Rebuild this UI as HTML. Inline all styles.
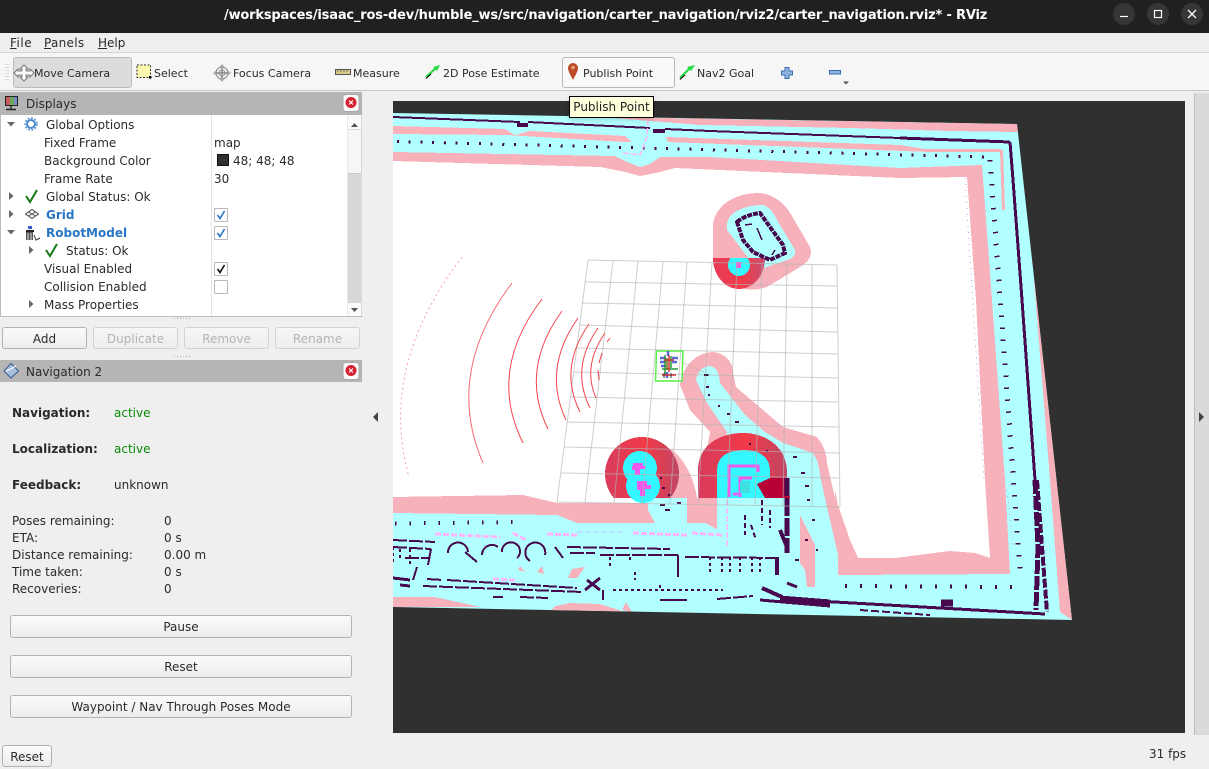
<!DOCTYPE html>
<html><head><meta charset="utf-8"><title>RViz</title>
<style>
html,body{margin:0;padding:0}
body{width:1209px;height:769px;overflow:hidden;background:#efefef;position:relative;font-family:"DejaVu Sans",sans-serif;font-size:12px;color:#222}
.a{position:absolute}
.t{position:absolute;white-space:nowrap;line-height:18px;height:18px;color:#2a2a2a;margin-top:1px}
.m{margin-top:0}
.tb{font-size:11px}
.b{font-weight:bold}
.blue{color:#2a76c6;font-weight:bold}
.btn{position:absolute;box-sizing:border-box;border:1px solid #b2b2b2;border-radius:3px;background:linear-gradient(#fbfbfb,#ececec);text-align:center;color:#2a2a2a;line-height:20px;height:22px;padding-top:1px}
.dis{color:#b4b4b4;border-color:#d2d2d2;background:linear-gradient(#f6f6f6,#eeeeee)}
.cb{position:absolute;box-sizing:border-box;width:14px;height:14px;left:214px;border:1px solid #b8b8b8;background:#fff;border-radius:1px}
.dock{position:absolute;left:0;width:362px;background:#b5b5b5;height:23px}
u{text-decoration:underline}
svg{position:absolute;overflow:visible}
</style></head><body>

<!-- map -->
<svg class="a" style="left:0;top:0" width="1209" height="769" viewBox="0 0 1209 769">
<defs>
<clipPath id="vp"><polygon points="393,113 1017,124 1072,620 393,607"/></clipPath>
<clipPath id="ab"><rect x="560" y="300" width="300" height="198"/></clipPath>
<clipPath id="be"><rect x="700" y="258" width="100" height="50"/></clipPath>
<linearGradient id="rg2" x1="0" y1="0" x2="1" y2="0"><stop offset="0" stop-color="#e63c58"/><stop offset=".55" stop-color="#f23a4a"/><stop offset="1" stop-color="#c85070"/></linearGradient>
<linearGradient id="rg3" x1="0" y1="0" x2="1" y2="0"><stop offset="0" stop-color="#d83c5c"/><stop offset=".55" stop-color="#f23a48"/><stop offset="1" stop-color="#c04664"/></linearGradient>
</defs>
<rect x="393" y="101" width="792" height="632" fill="#303030"/>
<g clip-path="url(#vp)" shape-rendering="crispEdges">
<rect x="393" y="110" width="700" height="520" fill="#b2ffff"/>
<!-- top strips -->
<polygon points="600,117 1017,124 1018,132 950,131 850,128 700,125" fill="#f8b1ba"/>
<polygon points="393,126 505,129 515,135 530,131 625,136 632,142 624,142 507,135 393,134" fill="#ffb2ba"/>
<polygon points="666,137 900,145 925,149 1000,149 1003,152 930,152 668,142" fill="#f9b2ba"/>
<polygon points="1000,150 1003,150 1005,210 1002,210" fill="#f9b2ba"/>
<!-- big pink -->
<polygon points="393,152 615,156 625,161 640,167 650,164 660,157 710,157 900,168 982,165 992,300 1005,480 1010,574 840,575 838,555 833,520 822,507 815,523 715,523 648,523 577,523 557,515 393,513" fill="#f6b1bb"/>
<polygon points="1034,280 1036,280 1057,480 1072,620 1060,612 1050,480" fill="#f6b1bb"/>
<!-- white -->
<polygon points="393,161 600,167 625,172 640,176 660,172 675,168 900,178 967,177 976,300 985,480 990,558 975,553 950,551 895,558 858,558 850,540 838,505 835,490 825,440 640,503 557,503 523,495 393,497" fill="#fff"/>
<polygon points="700,430 835,430 835,503 640,503 640,430" fill="#fff"/>
<!-- capsule -->
<path d="M680,385 C682,365 698,352 713,352 C725,353 733,362 733,372 L736,387 L763,410 L783,427 L817,437 C824,445 827,455 827,463 L837,507 L838,555 L840,575 L800,575 L700,520 L698,498 L710,432 L690,410Z" fill="#f6b1bb"/>
<path d="M662,445 C680,450 695,475 698,505 L660,505Z" fill="#f6b1bb"/>
<path d="M696,380 C697,372 703,366 710,366 C716,367 719,372 720,383 L745,415 L765,432 L783,443 L813,453 Q819,462 820,475 L827,507 L838,555 L838,578 L800,578 L717,530 L717,498 L727,432 L707,403Z" fill="#b2ffff"/>
<polygon points="648,498 687,498 687,523 655,523 648,510" fill="#b2ffff"/>
<polygon points="800,515 815,545 815,587 807,587 805,570 800,563" fill="#f6b1bb"/>
<!-- top object -->
<path d="M713,223 C716,205 735,193 758,193 C772,193 785,203 792,216 L810,247 C813,257 808,262 800,267 L767,287 Q755,291 745,289 L713,258Z" fill="#f6b1bb"/>
<path d="M727,223 C729,212 745,205 763,205 Q771,207 777,220 L795,250 Q796,256 790,259 L763,268 L750,260 L727,230Z" fill="#b2ffff"/>
<path d="M713,258 H765 A26,31 0 0 1 713,258Z" fill="url(#rg2)"/>
<circle cx="739" cy="265" r="11" fill="#33f8ff" clip-path="url(#be)"/>
<rect x="736" y="262" width="5" height="6" fill="#f060e0"/>
<path fill="none" d="M737,222 Q745,215 760,213 L770,227 L783,245 L785,253 L770,260 L753,252 L743,240Z" stroke="#47084e" stroke-width="4" stroke-dasharray="5 1"/>
<path fill="none" d="M745,225 L752,224 M757,228 L762,240 M775,250 L772,255" stroke="#47084e" stroke-width="1.500"/>
<!-- left red blob -->
<circle cx="642" cy="474" r="37" fill="url(#rg3)" clip-path="url(#ab)"/>
<circle cx="640" cy="468" r="17" fill="#33f8ff" clip-path="url(#ab)"/>
<circle cx="643" cy="486" r="17" fill="#33f8ff"/>
<path d="M633,463 h10 v3 h2 v3 h-5 v6 h-5 v-5 h-3 v-4 h1Z M637,481 h10 v4 h4 v4 h-6 v7 h-5 v-6 h-3Z" fill="#f258ee"/>
<!-- arch -->
<path d="M698,498 V470 C698,445 720,433 743,433 C766,433 787,447 787,472 V498Z" fill="url(#rg3)"/>
<path d="M717,498 V470 C717,455 730,450 745,450 C760,450 770,458 770,470 V498Z" fill="#33f8ff"/>
<path d="M729,497 V466 H758 V472 M740,497 V478 H752 M733,494 H738" fill="none" stroke="#f258ee" stroke-width="3"/>
<rect x="740" y="481" width="10" height="12" fill="#40e0e0"/>
<polygon points="757,484 770,478 787,478 790,498 765,498" fill="#b80035"/>
<rect x="717" y="498" width="71" height="5" fill="#b2ffff"/>
<polygon points="698,498 717,498 717,523 690,523 687,503" fill="#f6b1bb"/>
<!-- darks -->
<g fill="none" stroke="#47084e" stroke-width="2">
<path stroke-width="2" d="M393,117 L520,122 M528,122 L650,128 M665,129 L710,131 L900,138"/>
<path stroke-width="3" d="M900,138 L1010,142"/>
<path stroke-width="4" d="M517,125 H528 M653,131 H665"/>
<path stroke-width="3" d="M1010,142 L1013,180 L1017,233 L1020,273 L1022,300 L1035,480"/>
<path stroke-width="5" stroke-dasharray="14 2" d="M1035,480 L1038,547 L1036,610"/>
<path stroke-width="4" stroke-dasharray="9 2" d="M1037,480 L1043,560 L1047,612"/>
<path stroke-width="3" d="M800,600 L1045,614"/>
<path stroke-width="2" stroke-dasharray="8 3" d="M860,610 L930,615"/>
<path stroke-width="7" d="M941,603 H953"/>
<path stroke-width="3" stroke-dasharray="2 9.7" d="M397,141.5 L985,157"/>
<path stroke-width="5" stroke-dasharray="1.5 10.5" d="M990,160 L1020,570"/>
<path stroke-width="4" stroke-dasharray="2 13" d="M845,586 L1020,587"/>
<path stroke-width="4" stroke-dasharray="1.5 13" d="M395,523.5 L520,522"/>
<path stroke-dasharray="14 2" d="M393,540 L435,542 M567,547 L670,549 M570,553 H595 M600,555 H678 M685,557 L780,558 M393,547 L431,549 M405,558 H430 M427,579 L443,580 M447,580 L577,588 M423,586 L583,592 M520,597 L548,598 M717,599 L753,596"/>
<path d="M448,553 A10,10 0 0 1 468,552 M465,552 L477,562 M482,555 A10,10 0 0 1 498,547 M502,552 A9,9 0 1 1 517,558 M530,561 A10,10 0 1 1 545,555 M555,547 L563,558 M678,555 V577 M431,549 L428,565 M417,567 L413,580 M493,597 H503 M603,590 V600 M660,600 H687"/>
<path stroke-dasharray="3 3" d="M610,557 V567 M630,557 V563 M710,557 V573 M722,557 V573 M730,557 V573 M740,557 V573 M752,557 V573 M760,557 V573 M393,547 V562 M400,549 V560 M410,549 V566 M613,590 L723,590 M660,585 V590 M635,572 V580"/>
<path stroke-width="3" d="M393,578 L410,580 M400,585 L410,586 M587,580 L600,590 M585,590 L600,578"/>
<path stroke-width="4" d="M762,588 L782,597"/>
<path stroke-width="5" d="M780,598 L830,602"/>
<path stroke-width="3" d="M760,600 L830,606 M787,583 L797,587"/>
<path stroke-width="5" stroke-dasharray="18 2" d="M787,478 L787,553"/>
<path stroke-width="4" d="M780,530 L787,547 M777,557 V575"/>
<path stroke-width="2" stroke-dasharray="5 3" d="M762,500 V525 M751,525 L756,540 M745,515 V535 M770,510 V528"/>
<path stroke-width="2" d="M704,375h4 M706,387h3 M709,394v2 M719,405v2 M727,414h3 M735,422h4 M750,443v2 M767,450v2 M793,457h4 M801,473h4 M805,486h4 M807,500h3 M812,520h3 M805,540h3 M795,560h4 M816,550h2 M660,505h5 M665,510h5 M677,503h4 M662,488h3 M668,495h3 M660,478h2"/>
</g>
<!-- light magenta -->
<g fill="none" stroke="#ffb6fb" stroke-width="3" stroke-dasharray="6 2">
<path d="M435,534 L500,537 M513,533 L526,540 M547,534 L577,535 M633,533 L687,535 M692,533 L722,535 M493,579 L515,580"/>
<path stroke="#bcd8ff" stroke-width="1.5" d="M577,532 L622,532"/>
<path stroke-width="1.5" d="M727,500 V546 M648,120 L647,137 L640,155 L623,153"/>
<path stroke="#c79ae6" stroke-width="1" stroke-dasharray="1 5" d="M965,178 L984,480 M1007,490 L1013,545"/>
</g>
<polygon points="572,569 585,567 577,578 568,578" fill="#f6b1bb"/>
<polygon points="520,566 525,572 518,570" fill="#f6b1bb"/>
<polygon points="537,572 542,566 544,574" fill="#f6b1bb"/>
<!-- bottom pink -->
<polygon points="393,597 435,597 480,607 393,607" fill="#f6b1bb"/>
<polygon points="555,606 570,603 600,604 625,612 550,612" fill="#f6b1bb"/>
<polygon points="622,610 626,602 632,612" fill="#f6b1bb"/>
</g>
<!-- grid -->
<g fill="none" stroke="#b4b4b4" stroke-opacity=".65" stroke-width="1">
<path d="M588,260 L557,502 M613,261 L585,502 M638,261 L614,503 M663,262 L642,503 M687,262 L670,504 M712,263 L698,504 M737,263 L727,505 M762,264 L755,505 M787,264 L783,506 M812,265 L812,506 M837,265 L840,507"/>
<path d="M588,260 L837,265 M585,282 L837,286 M582,303 L837,308 M580,325 L837,332 M577,348 L838,354 M574,372 L838,378 M570,397 L838,402 M567,422 L839,427 M564,447 L839,453 M561,473 L839,478 M557,502 L840,507"/>
</g>
<!-- lidar -->
<g fill="none" stroke="#f6444e" stroke-width="1">
<path stroke="#f9a0a4" stroke-dasharray="2 3" d="M462,257 Q378,367 409,477"/>
<path stroke="#f56a72" d="M512,283 Q444,373 483,463"/>
<path d="M542,299 Q487,371 523,443"/>
<path d="M562,311 Q519,370 548,429"/>
<path d="M578,318 Q542,369 566,420"/>
<path d="M589,324 Q558,368 580,412"/>
<path d="M598,328 Q570,368 590,408"/>
<path d="M605,333 Q582,366 596,398"/>
<path d="M610,338 L607,342 M602,353 L599,363 M598,370 L599,380"/>
</g>
<!-- robot -->
<polygon points="656.5,351 683,351 682,381 655.5,381" fill="none" stroke="#55ee44" stroke-width="1.4"/>
<g fill="none" stroke-width="1.5">
<path stroke="#5a6ad0" stroke-width="2.500" d="M668,351 V356 M660,358 H666 M660,362 H666 M661,366 H666 M672,358 H678 M672,362 H677 M667,372 V378"/>
<path stroke="#2a9a3a" d="M662,369 H678 M665,355 V374 M671,356 V368"/>
<path stroke="#d03030" d="M669,355 V372 M662,375 H676 M664,360 H674"/>
<path stroke="#7a6a20" d="M667,358 V370"/>
<path stroke="#333" stroke-width="1" d="M664,373 V378 M671,373 V378"/>
</g>
<path d="M683,363 L704,372" stroke="#b6a8a0" stroke-width="1" stroke-dasharray="1.5 1.5" fill="none"/>
<path d="M704,375h5" stroke="#222" stroke-width="1"/>
</svg>

<!-- side columns -->
<div class="a" style="left:1194px;top:93px;width:1px;height:642px;background:#bdbdbd"></div>
<div class="a" style="left:1195px;top:93px;width:14px;height:642px;background:#dadada"></div>
<svg style="left:0;top:0" width="1209" height="769"><path d="M378,412 V422 L373,417Z M1199,412 V422 L1204,417Z" fill="#444"/></svg>

<!-- title bar -->
<div class="a" style="left:0;top:0;width:1209px;height:33px;background:#202020"></div>
<div class="a" id="ttl" style="left:224px;top:6px;width:762px;height:20px;line-height:20px;color:#fff;font-weight:bold;font-size:13px;white-space:nowrap;text-align:center;font-family:'DejaVu Sans',sans-serif;letter-spacing:-.18px">/workspaces/isaac_ros-dev/humble_ws/src/navigation/carter_navigation/rviz2/carter_navigation.rviz* - RViz</div>
<svg style="left:1113px;top:3px" width="96" height="26">
<circle cx="11" cy="11" r="11" fill="#363636"/><circle cx="45" cy="11" r="11" fill="#363636"/><circle cx="79" cy="11" r="11" fill="#363636"/>
<path d="M7,13.5 H15" stroke="#fff" stroke-width="1.2"/><rect x="41.5" y="7.5" width="7" height="7" fill="none" stroke="#fff" stroke-width="1.2"/><path d="M75,7 L83,15 M83,7 L75,15" stroke="#fff" stroke-width="1.3"/>
</svg>

<!-- menu -->
<div class="a" style="left:0;top:33px;width:1209px;height:19px;background:#eeeeee;border-bottom:1px solid #d6d6d6"></div>
<div class="t m" style="left:10px;top:34px;letter-spacing:.5px"><u>F</u>ile</div>
<div class="t m" style="left:44px;top:34px;letter-spacing:.3px"><u>P</u>anels</div>
<div class="t m" style="left:98px;top:34px"><u>H</u>elp</div>

<!-- toolbar -->
<div class="a" style="left:0;top:53px;width:1209px;height:37px;background:#f6f6f6;border-bottom:1px solid #c6c6c6"></div>
<svg style="left:5px;top:63px" width="4" height="18"><path d="M1,1V18 M3,1V18" stroke="#bbb" stroke-dasharray="1 2"/></svg>
<div class="a" style="left:13px;top:57px;width:117px;height:29px;background:#dcdcdc;border:1px solid #bcbcbc;border-radius:3px"></div>
<div class="a" style="left:562px;top:57px;width:111px;height:29px;background:#f9f9f9;border:1px solid #b8b8b8;border-radius:3px"></div>
<svg style="left:0;top:55px" width="880" height="36">
<!-- move -->
<path d="M24,10 L28,14 H26 V16 H30 V14 L34,18 L30,22 V20 H26 V22 H28 L24,26 L20,22 H22 V20 H18 V22 L14,18 L18,14 V16 H22 V14 H20Z" fill="#fff" stroke="#777" stroke-width="1"/>
<!-- select -->
<rect x="137" y="10" width="13.5" height="12.5" fill="#fdf8b0" stroke="#333" stroke-dasharray="2 1.5"/><rect x="149" y="21" width="2.5" height="2.5" fill="#000"/>
<!-- focus -->
<circle cx="222" cy="18" r="6" fill="#eee" stroke="#888"/><circle cx="222" cy="18" r="3" fill="none" stroke="#999"/><path d="M214,18 H230 M222,10 V26" stroke="#888" stroke-width="1.4"/><path d="M222,9 L219.5,12 H224.5Z M222,27 L219.5,24 H224.5Z M213,18 L216,15.5 V20.5Z M231,18 L228,15.5 V20.5Z" fill="#aaa"/>
<!-- ruler -->
<rect x="335.5" y="14.5" width="15" height="5" fill="#d8c98a" stroke="#555"/>
<path d="M338,15V17 M341,15V17 M344,15V17 M347,15V17" stroke="#555" stroke-width=".7"/>
<!-- arrows -->
<path d="M426,22 L436,13" stroke="#1ed83a" stroke-width="2"/><path d="M440,10 L433,12 L437,16Z" fill="#22dd44"/><path d="M426,23.5 L431,19" stroke="#101" stroke-width="1"/>
<path d="M680,23 L690,13" stroke="#1ed83a" stroke-width="2"/><path d="M695,10 L687,12 L691,16Z" fill="#22dd44"/><path d="M680,24.5 L685,20" stroke="#101" stroke-width="1"/>
<!-- pin -->
<path d="M573,25 C570,19 568,16 568,13 A5,5 0 0 1 578,13 C578,16 576,19 573,25Z" fill="#bb4a28"/><circle cx="573" cy="12.5" r="1.8" fill="#eea080"/>
<!-- plus -->
<path d="M785,12.5 H789 V16 H792.5 V20 H789 V23.5 H785 V20 H781.5 V16 H785Z" fill="#8fb4e0" stroke="#3a6cb0"/>
<!-- minus -->
<rect x="829.5" y="15.5" width="11" height="3.5" fill="#8fb4e0" stroke="#3a6cb0"/>
<path d="M843,26.5 H849 L846,29.5Z" fill="#555"/>
</svg>
<div class="t tb" style="left:34px;top:64px">Move Camera</div>
<div class="t tb" style="left:154px;top:64px">Select</div>
<div class="t tb" style="left:233px;top:64px">Focus Camera</div>
<div class="t tb" style="left:353px;top:64px">Measure</div>
<div class="t tb" style="left:443px;top:64px">2D Pose Estimate</div>
<div class="t tb" style="left:583px;top:64px">Publish Point</div>
<div class="t tb" style="left:697px;top:64px">Nav2 Goal</div>

<!-- tooltip -->
<div class="a" style="left:569px;top:96px;width:83px;height:20px;background:#ffffdc;border:1px solid #000;box-shadow:0 2px 5px rgba(0,0,0,.15);line-height:20px;text-align:center;color:#222;white-space:nowrap">Publish Point</div>

<!-- Displays dock -->
<div class="dock" style="top:92px"></div>
<svg style="left:0;top:92px" width="362" height="23">
<rect x="5" y="4" width="13" height="10" fill="#222"/><rect x="6" y="5" width="4" height="8" fill="#c85a5a"/><rect x="10" y="5" width="4" height="8" fill="#6aaa5a"/><rect x="14" y="5" width="3" height="8" fill="#7a8ac8"/><path d="M11,14V17 M6,17.5H16" stroke="#222" stroke-width="1.4"/>
<rect x="343" y="2.5" width="16" height="17" rx="3" fill="#fafafa" stroke="#aaa"/><circle cx="351" cy="10.5" r="5.5" fill="#d8202e"/><path d="M349,8.5 L353,12.5 M353,8.5 L349,12.5" stroke="#fff" stroke-width="1.2"/>
</svg>
<div class="t" style="left:26px;top:94px">Displays</div>
<div class="a" style="left:0;top:115px;width:362px;height:202px;background:#fff;box-sizing:border-box;border:1px solid #bcbcbc;border-top:0"></div>
<div class="a" style="left:211px;top:115px;width:1px;height:201px;background:#e2e2e2"></div>
<div class="a" style="left:347px;top:115px;width:14px;height:201px;background:#d8d8d8;border-left:1px solid #e8e8e8"></div>
<div class="a" style="left:348px;top:129px;width:13px;height:43px;background:#f6f6f6;border-bottom:1px solid #c8c8c8;border-top:1px solid #ddd"></div>
<div class="a" style="left:348px;top:115px;width:13px;height:14px;background:#fafafa"></div>
<div class="a" style="left:348px;top:303px;width:13px;height:13px;background:#fafafa"></div>
<svg style="left:0;top:115px" width="362" height="202">
<path d="M351,12 L358,12 L354.500,8Z M351,193 L358,193 L354.500,197Z" fill="#555"/>
<path d="M7,7 H15 L11,11.500Z M7,115 H15 L11,119.500Z" fill="#666"/>
<path d="M9,77 V85 L13.500,81Z M9,95 V103 L13.500,99Z M29,131 V139 L33.500,135Z M29,185 V193 L33.500,189Z" fill="#666"/>
<!-- gear -->
<circle cx="31" cy="9" r="4" fill="none" stroke="#4a88cc" stroke-width="2"/><circle cx="31" cy="9" r="6" fill="none" stroke="#5a96d6" stroke-width="1.500" stroke-dasharray="2 1.500"/>
<!-- checks -->
<path d="M26,81 L30,87 L37,75" fill="none" stroke="#167a16" stroke-width="2"/>
<path d="M46,135 L50,141 L57,129" fill="none" stroke="#167a16" stroke-width="2"/>
<!-- grid icon -->
<path d="M25.500,99 L32,94.500 L38.500,99 L32,103.500Z M28.500,97 L35.500,101 M35.500,97 L28.500,101" fill="none" stroke="#444"/>
<!-- robot icon -->
<rect x="28" y="111" width="4" height="3" fill="#3a5cc0"/><rect x="26" y="115" width="8" height="2" fill="#222"/><path d="M26,117 h7 v8 h-7z" fill="#555"/><path d="M28,118 v7 M31,118 v7" stroke="#ddd"/><path d="M34,120 L36,125 L40,123" fill="none" stroke="#333"/>
</svg>
<div class="t" style="left:46px;top:115px">Global Options</div>
<div class="t" style="left:44px;top:133px">Fixed Frame</div><div class="t" style="left:214px;top:133px">map</div>
<div class="t" style="left:44px;top:151px">Background Color</div>
<div class="a" style="left:217px;top:154px;width:10px;height:10px;background:#303030;border:1px solid #111"></div>
<div class="t" style="left:233px;top:151px">48; 48; 48</div>
<div class="t" style="left:44px;top:169px">Frame Rate</div><div class="t" style="left:214px;top:169px">30</div>
<div class="t" style="left:46px;top:187px">Global Status: Ok</div>
<div class="t blue" style="left:46px;top:205px">Grid</div>
<div class="cb" style="top:208px"><svg width="12" height="12" style="left:0;top:0"><path d="M2.500,6 L5,9.500 L9.500,2" fill="none" stroke="#2a76c6" stroke-width="1.600"/></svg></div>
<div class="t blue" style="left:46px;top:223px">RobotModel</div>
<div class="cb" style="top:226px"><svg width="12" height="12" style="left:0;top:0"><path d="M2.500,6 L5,9.500 L9.500,2" fill="none" stroke="#2a76c6" stroke-width="1.600"/></svg></div>
<div class="t" style="left:66px;top:241px">Status: Ok</div>
<div class="t" style="left:44px;top:259px">Visual Enabled</div>
<div class="cb" style="top:262px"><svg width="12" height="12" style="left:0;top:0"><path d="M2.500,6 L5,9.500 L9.500,2" fill="none" stroke="#111" stroke-width="1.600"/></svg></div>
<div class="t" style="left:44px;top:277px">Collision Enabled</div>
<div class="cb" style="top:280px"></div>
<div class="t" style="left:44px;top:295px">Mass Properties</div>

<svg style="left:0;top:0" width="362" height="360"><path d="M174,318.500 H190 M174,356.500 H190" stroke="#aaa" stroke-dasharray="1 2"/></svg>
<div class="btn" style="left:2px;top:327px;width:85px">Add</div>
<div class="btn dis" style="left:93px;top:327px;width:85px">Duplicate</div>
<div class="btn dis" style="left:184px;top:327px;width:85px">Remove</div>
<div class="btn dis" style="left:275px;top:327px;width:85px">Rename</div>

<!-- Navigation dock -->
<div class="dock" style="top:360px;height:22px"></div>
<svg style="left:0;top:360px" width="362" height="22">
<path d="M4,11 L11,3.500 L18.500,11 L11,18Z" fill="#a8bede" stroke="#3a5c90"/><path d="M6,11.500 L16,6" stroke="#fff"/>
<rect x="343" y="2.500" width="16" height="17" rx="3" fill="#fafafa" stroke="#aaa"/><circle cx="351" cy="10.500" r="5.500" fill="#d8202e"/><path d="M349,8.500 L353,12.500 M353,8.500 L349,12.500" stroke="#fff" stroke-width="1.200"/>
</svg>
<div class="t" style="left:26px;top:362px">Navigation 2</div>

<div class="t b" style="left:12px;top:403px">Navigation:</div><div class="t" style="left:114px;top:403px;color:#0a8a0a">active</div>
<div class="t b" style="left:12px;top:439px">Localization:</div><div class="t" style="left:114px;top:439px;color:#0a8a0a">active</div>
<div class="t b" style="left:12px;top:475px">Feedback:</div><div class="t" style="left:114px;top:475px">unknown</div>
<div class="t" style="left:12px;top:511px">Poses remaining:</div><div class="t" style="left:164px;top:511px">0</div>
<div class="t" style="left:12px;top:528px">ETA:</div><div class="t" style="left:164px;top:528px">0 s</div>
<div class="t" style="left:12px;top:545px">Distance remaining:</div><div class="t" style="left:164px;top:545px">0.00 m</div>
<div class="t" style="left:12px;top:562px">Time taken:</div><div class="t" style="left:164px;top:562px">0 s</div>
<div class="t" style="left:12px;top:579px">Recoveries:</div><div class="t" style="left:164px;top:579px">0</div>

<div class="btn" style="left:10px;top:615px;width:342px;height:23px">Pause</div>
<div class="btn" style="left:10px;top:655px;width:342px;height:23px">Reset</div>
<div class="btn" style="left:10px;top:695px;width:342px;height:23px">Waypoint / Nav Through Poses Mode</div>
<div class="btn" style="left:2px;top:745px;width:50px">Reset</div>
<div class="t" style="left:1149px;top:744px">31 fps</div>
</body></html>
